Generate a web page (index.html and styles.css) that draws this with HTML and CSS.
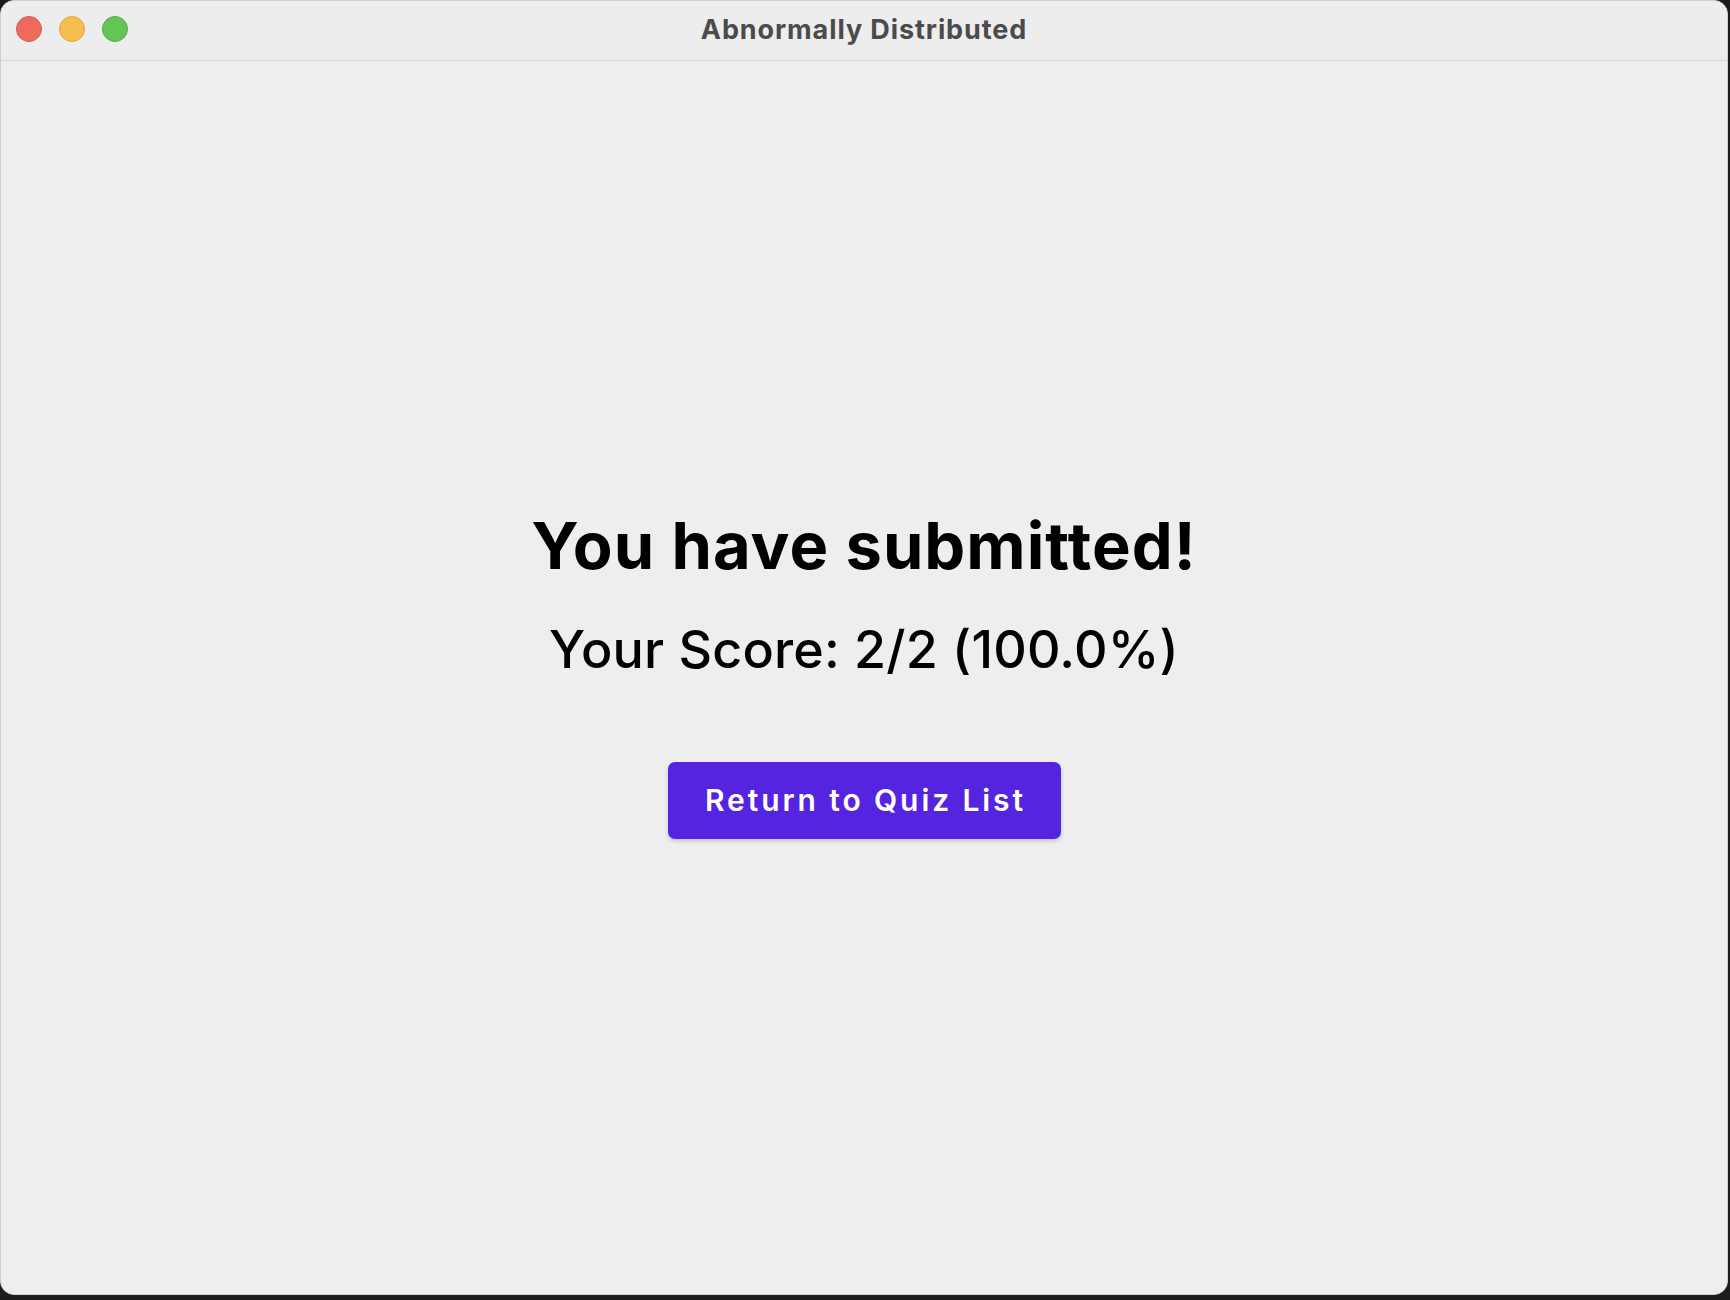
FILE: index.html
```html
<!DOCTYPE html>
<html lang="en">
<head>
<meta charset="utf-8">
<title>Abnormally Distributed</title>
<link rel="stylesheet" href="styles.css">
</head>
<body>
<div class="window">
  <header class="titlebar">
    <div class="lights">
      <span class="light red"></span>
      <span class="light yellow"></span>
      <span class="light green"></span>
    </div>
    <div class="title">Abnormally Distributed</div>
  </header>
  <main class="content">
    <h1 class="heading">You have submitted!</h1>
    <p class="score">Your Score: 2/2 (100.0%)</p>
    <button class="return-btn" type="button"><span class="btn-label">Return to Quiz List</span></button>
  </main>
</div>
</body>
</html>
```
FILE: styles.css
```css
html, body {
  margin: 0;
  padding: 0;
  background: #1c1c1c;
  width: 1730px;
  height: 1300px;
  overflow: hidden;
}

.window {
  box-sizing: border-box;
  width: 1728px;
  height: 1295px;
  background: #eeeeee;
  border-radius: 14px;
  border: 1px solid #cfcfcf;
  overflow: hidden;
  display: flex;
  flex-direction: column;
  font-family: Inter, "Noto Sans", sans-serif;
}

.titlebar {
  position: relative;
  height: 60px;
  flex: 0 0 60px;
  box-sizing: border-box;
  border-bottom: 1px solid #d4d4d4;
  background: #ededed;
  display: flex;
  align-items: center;
  justify-content: center;
}

.lights {
  position: absolute;
  left: 15px;
  top: 15px;
  display: flex;
  gap: 17px;
}

.light {
  width: 26px;
  height: 26px;
  border-radius: 50%;
  box-sizing: border-box;
}
.light.red { background: #ee6a5f; border: 1px solid #d85a50; }
.light.yellow { background: #f5be4f; border: 1px solid #dea73d; }
.light.green { background: #62c554; border: 1px solid #52ad45; }

.title {
  font-size: 27px;
  font-weight: 700;
  color: #4b4b4b;
  line-height: 1;
  letter-spacing: 0.9px;
  margin-top: -2px;
}

.content {
  flex: 1;
  display: flex;
  flex-direction: column;
  align-items: center;
  justify-content: center;
  padding-bottom: 4px;
}

.heading {
  margin: 0;
  font-size: 65px;
  line-height: 1;
  font-weight: 700;
  letter-spacing: 1px;
  color: #000;
}

.score {
  margin: 46px 0 0;
  font-size: 52px;
  line-height: 1;
  font-weight: 500;
  letter-spacing: 0.2px;
  color: #000;
}

.return-btn {
  margin-top: 86px;
  width: 393px;
  height: 77px;
  border: none;
  border-radius: 7px;
  background: #5524e0;
  color: #ffffff;
  font-family: Inter, "Noto Sans", sans-serif;
  font-size: 30px;
  font-weight: 600;
  box-shadow: 0 2px 4px rgba(0, 0, 0, 0.18);
  padding: 0;
}

.btn-label {
  letter-spacing: 2.9px;
  margin-right: -2.9px;
}
```
